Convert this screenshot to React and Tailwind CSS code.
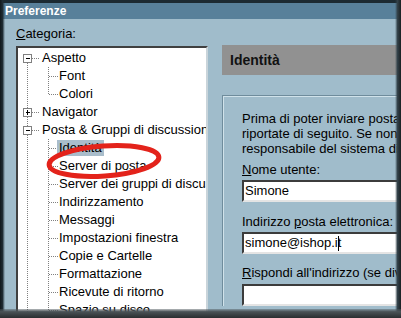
import React from "react";

const rows = [
  { t: "Aspetto", lvl: 0, box: "-" },
  { t: "Font", lvl: 1 },
  { t: "Colori", lvl: 1 },
  { t: "Navigator", lvl: 0, box: "+" },
  { t: "Posta & Gruppi di discussione", lvl: 0, box: "-" },
  { t: "Identità", lvl: 1, sel: true },
  { t: "Server di posta", lvl: 1 },
  { t: "Server dei gruppi di discussione", lvl: 1 },
  { t: "Indirizzamento", lvl: 1 },
  { t: "Messaggi", lvl: 1 },
  { t: "Impostazioni finestra", lvl: 1 },
  { t: "Copie e Cartelle", lvl: 1 },
  { t: "Formattazione", lvl: 1 },
  { t: "Ricevute di ritorno", lvl: 1 },
  { t: "Spazio su disco", lvl: 1 },
];

const cy = (i) => 10 + 18 * i + 0.5;

function TreeLines() {
  const dot = { stroke: "#808080", strokeWidth: 1, strokeDasharray: "1 1" };
  return (
    <svg className="absolute inset-0" width="190" height="280" shapeRendering="crispEdges">
      {/* root level */}
      <line x1="9.5" y1={cy(0)} x2="9.5" y2="280" {...dot} />
      {[0, 3, 4].map((i) => (
        <line key={i} x1="14" y1={cy(i)} x2="21" y2={cy(i)} {...dot} />
      ))}
      {/* Aspetto children */}
      <line x1="30.5" y1="19" x2="30.5" y2={cy(2)} {...dot} />
      {[1, 2].map((i) => (
        <line key={i} x1="31" y1={cy(i)} x2="40" y2={cy(i)} {...dot} />
      ))}
      {/* Posta children */}
      <line x1="30.5" y1="91" x2="30.5" y2={cy(14)} {...dot} />
      {[5, 6, 7, 8, 9, 10, 11, 12, 13, 14].map((i) => (
        <line key={i} x1="31" y1={cy(i)} x2="40" y2={cy(i)} {...dot} />
      ))}
      {rows.map((r, i) =>
        r.box ? (
          <g key={i}>
            <rect x="5.5" y={cy(i) - 4} width="8" height="8" fill="#fff" stroke="#808080" />
            <line x1="7.5" y1={cy(i)} x2="12" y2={cy(i)} stroke="#000" />
            {r.box === "+" && <line x1="9.5" y1={cy(i) - 2.5} x2="9.5" y2={cy(i) + 2.5} stroke="#000" />}
          </g>
        ) : null
      )}
    </svg>
  );
}

function Field({ children }) {
  return (
    <div className="h-[22px] w-[200px] border-2 border-t-[#3c3c3c] border-l-[#3c3c3c] border-b-[#e4e4e4] border-r-[#e4e4e4] bg-white pl-[1px] leading-[18px] whitespace-nowrap">
      {children}
    </div>
  );
}

export default function App() {
  return (
    <div className="relative w-[401px] h-[318px] overflow-hidden bg-[#a0bccb] text-[13px] text-black font-['Liberation_Sans',Arial,sans-serif]">
      {/* title bar */}
      <div className="h-[19px] border-t-[3px] border-[#1c2a32] bg-[#58809a] pl-[5px] text-[12px] font-bold leading-[16px] text-white">
        Preferenze
      </div>

      <div className="flex pt-[7px]">
        {/* categories */}
        <div className="ml-[16px] w-[192px] shrink-0">
          <div className="h-[15px] leading-[15px]">
            <span className="underline">C</span>ategoria:
          </div>
          <div className="mt-[5px] h-[280px] border-2 border-t-[#404040] border-l-[#404040] border-r-[#c9d4da] border-b-[#c9d4da] bg-white overflow-hidden">
            <div className="relative pt-[1px]">
              <TreeLines />
              {rows.map((r) => (
                <div
                  key={r.t}
                  className={`relative h-[18px] leading-[18px] whitespace-nowrap ${r.lvl === 0 ? "pl-[22px]" : "pl-[39px]"}`}
                >
                  <span className={r.sel ? "bg-[#a9bdcb] px-[2px] inline-block leading-[16px]" : "px-[2px]"}>{r.t}</span>
                </div>
              ))}
            </div>
          </div>
        </div>

        {/* right panel */}
        <div className="ml-[14px] flex-1">
          <div className="mt-[19px] h-[30px] bg-[linear-gradient(to_right,#919191_70%,#9d9d9d)] pl-[8px] text-[14px] font-bold leading-[30px] text-[#111]">
            Identità
          </div>
          <div className="mt-[20px] border-t border-l border-[#6f8c9c]">
            <div className="border-t border-l border-[#d0e2ea] pl-[18px] pt-[14px] whitespace-nowrap">
              <div className="leading-[15px]">
                <div>Prima di poter inviare posta è necessario</div>
                <div>riportate di seguito. Se non le conosci</div>
                <div>responsabile del sistema di posta</div>
              </div>
              <div className="mt-[6px] leading-[15px]">
                <span className="underline">N</span>ome utente:
              </div>
              <div className="mt-[3px]">
                <Field>Simone</Field>
              </div>
              <div className="mt-[12px] leading-[15px]">
                Indirizzo <span className="underline">p</span>osta elettronica:
              </div>
              <div className="mt-[3px]">
                <Field>
                  simone@ishop.i
                  <span className="inline-block w-[1px] h-[15px] bg-black align-middle -mr-[1px]" />t
                </Field>
              </div>
              <div className="mt-[11px] leading-[15px]">
                <span className="underline">R</span>ispondi all'indirizzo (se diverso):
              </div>
              <div className="mt-[4px]">
                <Field />
              </div>
            </div>
          </div>
        </div>
      </div>

      {/* red highlight */}
      <svg className="pointer-events-none absolute inset-0" width="401" height="318">
        <ellipse cx="104" cy="161" rx="55" ry="15" transform="rotate(-4 104 161)" fill="none" stroke="#e3231b" strokeWidth="5" />
      </svg>

      {/* window frame shadows */}
      <div className="pointer-events-none absolute left-0 top-0 bottom-0 w-[5px] bg-[linear-gradient(to_right,#11181c,#1f2c33_50%,rgba(60,80,90,0))]" />
      <div className="pointer-events-none absolute right-0 top-0 bottom-0 w-[6px] bg-[linear-gradient(to_left,#1a1f22,#33424a_60%,rgba(60,80,90,0))]" />
      <div className="pointer-events-none absolute left-0 right-0 bottom-0 h-[9px] bg-[linear-gradient(to_top,#2a2e30,#4a5256_70%,rgba(80,90,95,0.4))]" />
    </div>
  );
}
